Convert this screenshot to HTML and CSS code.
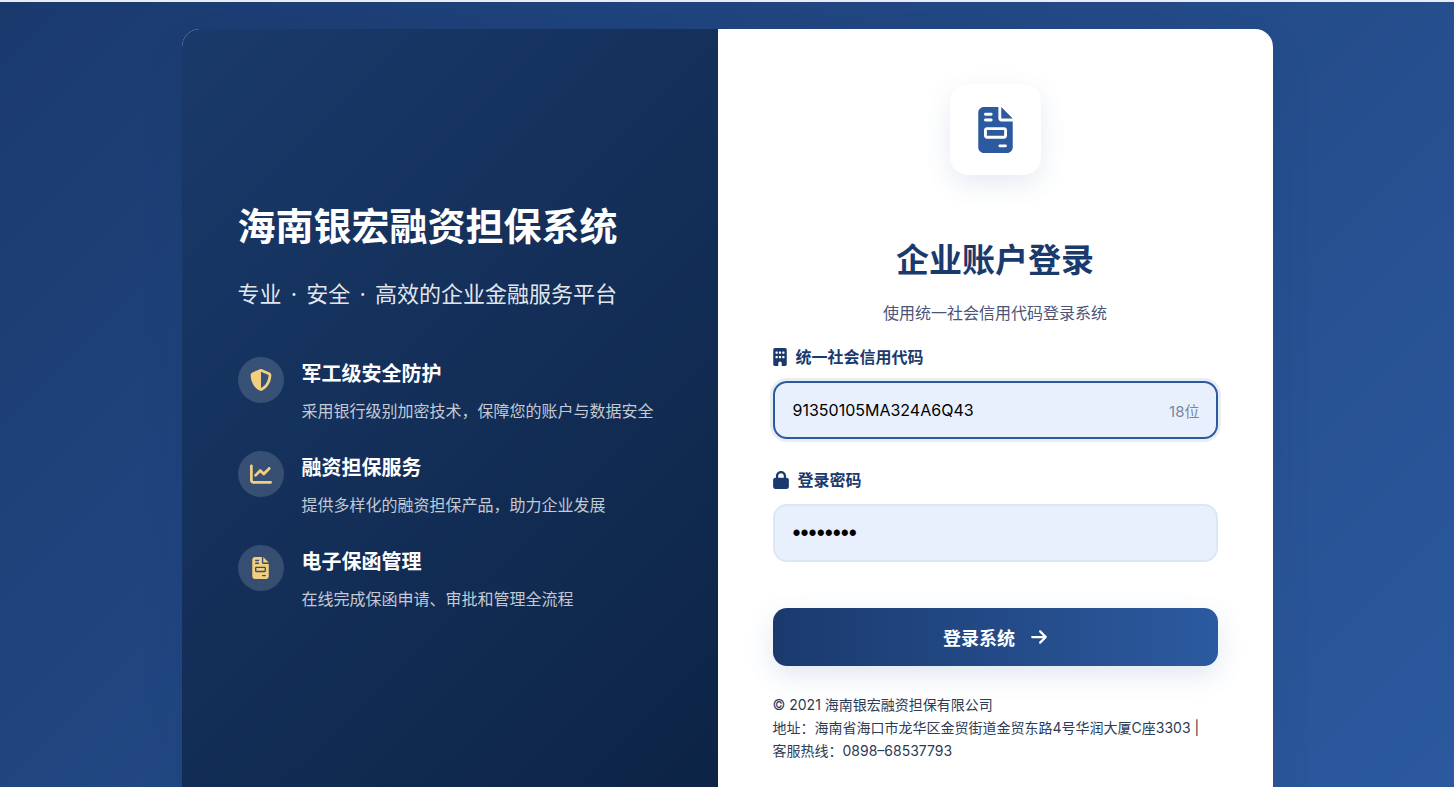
FILE: index.html
```html
<!DOCTYPE html>
<html lang="zh-CN">
<head>
<meta charset="utf-8">
<meta name="viewport" content="width=device-width, initial-scale=1">
<title>海南银宏融资担保系统</title>
<link rel="stylesheet" href="styles.css">
</head>
<body>
<svg class="sprite" aria-hidden="true">
  <symbol id="invoice" viewBox="0 0 384 512"><path d="M64 0C28.7 0 0 28.7 0 64V448c0 35.3 28.7 64 64 64H320c35.300 0 64-28.700 64-64V160H256c-17.700 0-32-14.300-32-32V0H64zM256 0V128H384L256 0zM80 64h64c8.800 0 16 7.200 16 16s-7.200 16-16 16H80c-8.800 0-16-7.200-16-16s7.200-16 16-16zm0 64h64c8.800 0 16 7.200 16 16s-7.200 16-16 16H80c-8.800 0-16-7.200-16-16s7.200-16 16-16zm16 96H288c17.700 0 32 14.300 32 32v64c0 17.700-14.300 32-32 32H96c-17.700 0-32-14.300-32-32V256c0-17.700 14.300-32 32-32zm0 32v64H288V256H96zM240 416h64c8.800 0 16 7.200 16 16s-7.200 16-16 16H240c-8.800 0-16-7.200-16-16s7.200-16 16-16z" fill-rule="evenodd"/></symbol>
</svg>
<main class="card">
  <section class="intro">
    <h1 class="intro-title">海南银宏融资担保系统</h1>
    <p class="intro-slogan">专业 <span class="dot">·</span> 安全 <span class="dot">·</span> 高效的企业金融服务平台</p>
    <ul class="features">
      <li class="feature">
        <span class="feature-icon"><svg width="22" height="22" viewBox="0 0 512 512" aria-hidden="true"><path d="M256 0c4.600 0 9.200 1 13.400 2.900L457.700 82.800c22 9.300 38.400 31 38.300 57.200c-.5 99.200-41.300 280.700-213.600 363.200c-16.700 8-36.100 8-52.800 0C57.300 420.700 16.500 239.200 16 140c-.1-26.200 16.300-47.900 38.300-57.200L242.700 2.900C246.800 1 251.400 0 256 0zm0 66.800V444.800C394 378 431.100 230.100 432 141.400L256 66.800z" fill-rule="evenodd"/></svg></span>
        <div class="feature-text">
          <h2 class="feature-title">军工级安全防护</h2>
          <p class="feature-desc">采用银行级别加密技术，保障您的账户与数据安全</p>
        </div>
      </li>
      <li class="feature">
        <span class="feature-icon"><svg width="22" height="22" viewBox="0 0 512 512" aria-hidden="true"><path d="M64 64c0-17.700-14.300-32-32-32S0 46.300 0 64V400c0 44.200 35.800 80 80 80H480c17.700 0 32-14.300 32-32s-14.300-32-32-32H80c-8.800 0-16-7.200-16-16V64zm406.600 86.600c12.500-12.500 12.500-32.800 0-45.300s-32.800-12.500-45.300 0L320 210.700l-57.400-57.400c-12.500-12.500-32.800-12.500-45.300 0l-112 112c-12.500 12.500-12.500 32.800 0 45.300s32.800 12.500 45.300 0L240 221.300l57.400 57.400c12.500 12.500 32.800 12.500 45.300 0l128-128z"/></svg></span>
        <div class="feature-text">
          <h2 class="feature-title">融资担保服务</h2>
          <p class="feature-desc">提供多样化的融资担保产品，助力企业发展</p>
        </div>
      </li>
      <li class="feature">
        <span class="feature-icon"><svg width="17" height="22" aria-hidden="true"><use href="#invoice"/></svg></span>
        <div class="feature-text">
          <h2 class="feature-title">电子保函管理</h2>
          <p class="feature-desc">在线完成保函申请、审批和管理全流程</p>
        </div>
      </li>
    </ul>
  </section>

  <section class="login">
    <div class="logo"><svg width="35" height="46" aria-hidden="true"><use href="#invoice"/></svg></div>
    <h2 class="login-title">企业账户登录</h2>
    <p class="login-hint">使用统一社会信用代码登录系统</p>
    <form class="form">
      <div class="field">
        <label class="label" for="code"><svg width="14" height="18" viewBox="0 0 384 512" aria-hidden="true"><path fill-rule="evenodd" d="M48 0C21.500 0 0 21.500 0 48V464c0 26.500 21.500 48 48 48h96V432c0-26.500 21.500-48 48-48s48 21.500 48 48v80h96c26.500 0 48-21.500 48-48V48c0-26.500-21.500-48-48-48H48zM80 224h32q16 0 16 16v32q0 16-16 16H80q-16 0-16-16v-32q0-16 16-16zm96 0h32q16 0 16 16v32q0 16-16 16h-32q-16 0-16-16v-32q0-16 16-16zm96 0h32q16 0 16 16v32q0 16-16 16h-32q-16 0-16-16v-32q0-16 16-16zM80 96h32q16 0 16 16v32q0 16-16 16H80q-16 0-16-16v-32q0-16 16-16zm96 0h32q16 0 16 16v32q0 16-16 16h-32q-16 0-16-16v-32q0-16 16-16zm96 0h32q16 0 16 16v32q0 16-16 16h-32q-16 0-16-16v-32q0-16 16-16z"/></svg>统一社会信用代码</label>
        <div class="control control-active">
          <input class="input" id="code" type="text" maxlength="18" value="91350105MA324A6Q43">
          <span class="suffix">18位</span>
        </div>
      </div>
      <div class="field">
        <label class="label" for="password"><svg width="16" height="18" viewBox="0 0 448 512" aria-hidden="true"><path d="M144 144v48H304V144c0-44.200-35.800-80-80-80s-80 35.800-80 80zM80 192V144C80 64.500 144.500 0 224 0s144 64.500 144 144v48h16c35.300 0 64 28.700 64 64V448c0 35.300-28.700 64-64 64H64c-35.300 0-64-28.700-64-64V256c0-35.300 28.700-64 64-64H80z"/></svg>登录密码</label>
        <div class="control">
          <input class="input input-password" id="password" type="password" value="password">
        </div>
      </div>
      <button class="submit" type="submit">登录系统<svg width="16" height="18" viewBox="0 0 448 512" aria-hidden="true"><path d="M438.600 278.600c12.500-12.500 12.500-32.800 0-45.300l-160-160c-12.500-12.500-32.800-12.500-45.300 0s-12.500 32.800 0 45.300L338.800 224 32 224c-17.700 0-32 14.300-32 32s14.300 32 32 32l306.700 0L233.400 393.400c-12.500 12.500-12.500 32.800 0 45.300s32.800 12.500 45.300 0l160-160z"/></svg></button>
    </form>
    <footer class="legal">
      © 2021 海南银宏融资担保有限公司<br>
      地址：海南省海口市龙华区金贸街道金贸东路4号华润大厦C座3303 |<br>
      客服热线：0898–68537793
    </footer>
  </section>
</main>
</body>
</html>
```
FILE: styles.css
```css
:root {
  --navy: #1a3a6e;
  --blue: #2c5aa0;
  --gold: #f0d080;
}

* {
  box-sizing: border-box;
  margin: 0;
  padding: 0;
}

html {
  scrollbar-width: none;
}

body {
  min-height: 100vh;
  padding: 27px;
  display: flex;
  align-items: center;
  justify-content: center;
  border-top: 2px solid #e9edf3;
  background: linear-gradient(135deg, var(--navy), var(--blue));
  font-family: Inter, "Noto Sans CJK SC", sans-serif;
  color: #2d3b55;
}

svg {
  fill: currentColor;
  flex: none;
}

.sprite {
  position: absolute;
  width: 0;
  height: 0;
}

.card {
  width: 100%;
  max-width: 1091px;
  display: grid;
  grid-template-columns: 536fr 555fr;
  border-radius: 18px;
  overflow: hidden;
  background: #fff;
  box-shadow: 0 18px 45px rgba(10, 50, 90, 0.08);
}

.intro {
  display: flex;
  flex-direction: column;
  justify-content: center;
  padding: 55px 50px 61px 56px;
  background: linear-gradient(135deg, #1a3a6b, #0c2344);
  color: #fff;
}

.intro-title {
  font-size: 38px;
  line-height: 50px;
  font-weight: 700;
  margin-bottom: 25px;
}

.intro-slogan {
  font-size: 22px;
  line-height: 36px;
  margin-bottom: 45px;
  color: rgba(255, 255, 255, 0.9);
}

.dot {
  margin: 0 3px;
}

.features {
  list-style: none;
}

.feature {
  display: flex;
  gap: 18px;
  margin-bottom: 27px;
}

.feature-icon {
  flex: none;
  width: 46px;
  height: 46px;
  border-radius: 50%;
  display: grid;
  place-items: center;
  background: rgba(255, 255, 255, 0.15);
  color: var(--gold);
}

.feature-title {
  font-size: 20px;
  line-height: 34px;
  font-weight: 700;
  margin-bottom: 7px;
}

.feature-desc {
  font-size: 16px;
  line-height: 26px;
  color: rgba(255, 255, 255, 0.75);
}

.login {
  padding: 55px;
}

.logo {
  width: 91px;
  height: 91px;
  margin: 0 auto 61px;
  border-radius: 18px;
  display: grid;
  place-items: center;
  color: var(--blue);
  background: #fff;
  box-shadow: 0 9px 27px rgba(44, 90, 160, 0.12);
}

.login-title {
  text-align: center;
  font-size: 33px;
  line-height: 48px;
  font-weight: 700;
  margin-bottom: 17px;
  color: var(--navy);
}

.login-hint {
  text-align: center;
  font-size: 16px;
  line-height: 24px;
  margin-bottom: 20px;
  color: #4a5578;
}

.field {
  margin-bottom: 29px;
}

.label {
  display: flex;
  align-items: center;
  gap: 9px;
  margin-bottom: 12px;
  font-size: 16px;
  line-height: 24px;
  font-weight: 700;
  color: var(--navy);
}

.control {
  display: flex;
  align-items: center;
  height: 58px;
  padding: 0 16px 0 18px;
  border: 2px solid #dce6f4;
  border-radius: 14px;
  background: #e8f0fe;
}

.control-active {
  border-color: var(--blue);
  box-shadow: 0 0 0 3px rgba(44, 90, 160, 0.1);
}

.input {
  flex: 1;
  min-width: 0;
  border: 0;
  outline: 0;
  background: none;
  font: inherit;
  font-size: 16px;
  color: #000;
}

.input-password {
  font-family: "Liberation Sans", sans-serif;
  font-size: 23px;
}

.suffix {
  font-size: 15px;
  color: #7a869c;
}

.submit {
  display: flex;
  align-items: center;
  justify-content: center;
  gap: 16px;
  width: 100%;
  height: 58px;
  margin: 46px 0 27px;
  border: 0;
  border-radius: 14px;
  background: linear-gradient(90deg, var(--navy), var(--blue));
  box-shadow: 0 9px 27px rgba(44, 90, 160, 0.15);
  font-family: inherit;
  font-size: 18px;
  font-weight: 700;
  color: #fff;
  cursor: pointer;
}

.legal {
  font-size: 14px;
  line-height: 23px;
}

@media (max-width: 900px) {
  .card {
    grid-template-columns: 1fr;
  }
}
```
